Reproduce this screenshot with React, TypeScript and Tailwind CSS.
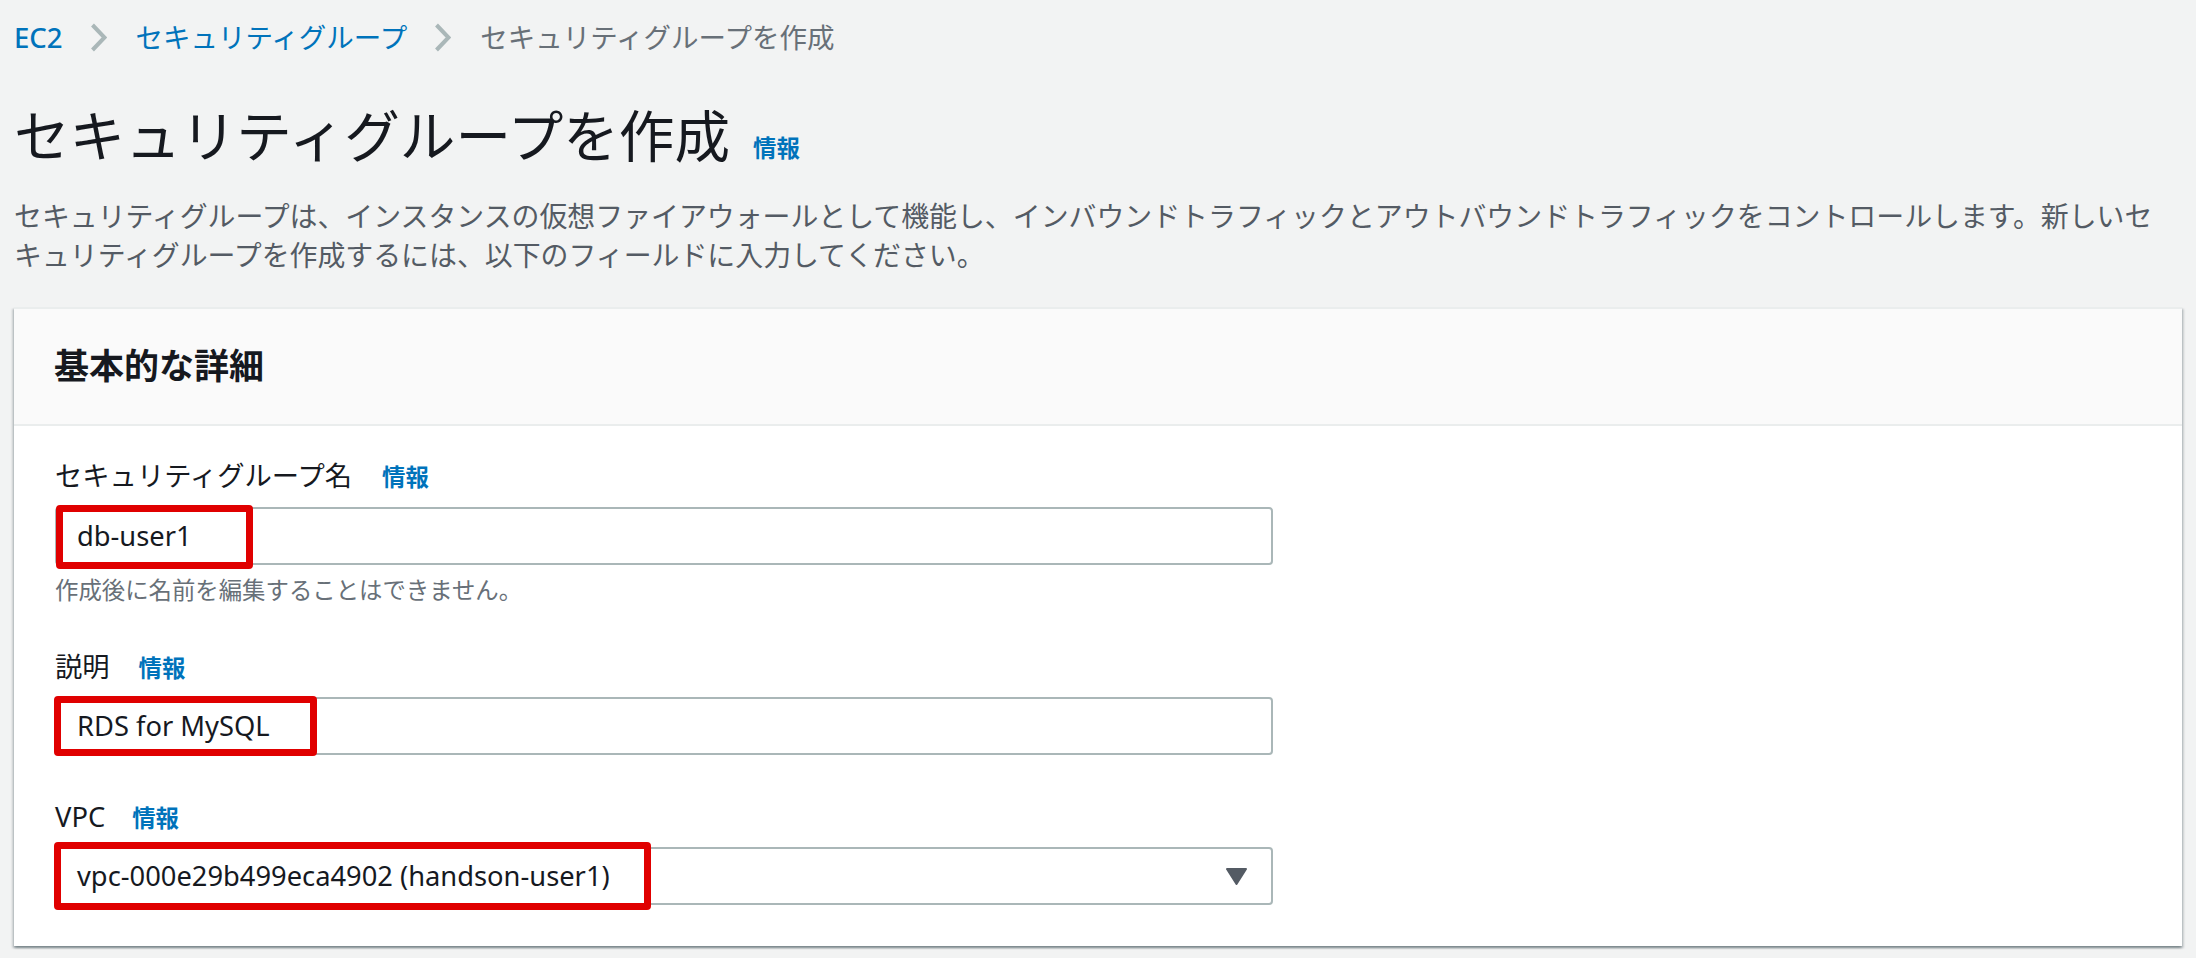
import React from "react";

function Chevron() {
  return (
    <svg width="17" height="29" viewBox="0 0 17 29" className="ml-[27px] mr-[29px] shrink-0">
      <polyline points="2.5,2 14.5,14.5 2.5,27" fill="none" stroke="#aab7b8" strokeWidth="4" strokeLinejoin="miter" />
    </svg>
  );
}

function Info({ className = "" }: { className?: string }) {
  return <span className={"text-[23.4px] font-bold text-[#0073bb] " + className}>情報</span>;
}

function Label({ text, gap }: { text: string; gap: string }) {
  return (
    <div className="flex items-baseline h-[39px] leading-[39px]">
      <span className="text-[27.3px] text-[#16191f]">{text}</span>
      <Info className={gap} />
    </div>
  );
}

export default function App() {
  return (
    <div className="min-h-screen bg-[#f2f3f3] font-['Noto_Sans','Noto_Sans_CJK_JP',sans-serif] px-[14px] pt-[18px] pb-[12px]">
      <nav className="flex items-center h-[39px] text-[27.5px] leading-[39px]">
        <span className="text-[#0073bb] font-medium">EC2</span>
        <Chevron />
        <span className="text-[#0073bb]">セキュリティグループ</span>
        <Chevron />
        <span className="text-[#687078]">セキュリティグループを作成</span>
      </nav>

      <div className="mt-[44px] flex items-baseline h-[70px]">
        <h1 className="text-[55.6px] leading-[70px] font-normal text-[#16191f]">セキュリティグループを作成</h1>
        <Info className="ml-[23px]" />
      </div>

      <p className="mt-[26px] text-[27.9px] leading-[38.5px] text-[#545b64] whitespace-nowrap">
        セキュリティグループは、インスタンスの仮想ファイアウォールとして機能し、インバウンドトラフィックとアウトバウンドトラフィックをコントロールします。新しいセ
        <br />
        キュリティグループを作成するには、以下のフィールドに入力してください。
      </p>

      <section className="mt-[33px] w-[2168px] bg-white border-t-2 border-[#eaeded] shadow-[0_2px_2px_0_rgba(0,28,36,0.3),2px_2px_2px_0_rgba(0,28,36,0.15),-2px_2px_2px_0_rgba(0,28,36,0.15)]">
        <div className="h-[117px] bg-[#fafafa] border-b-2 border-[#eaeded] flex items-center pl-[40px]">
          <h2 className="text-[35px] font-bold text-[#16191f]">基本的な詳細</h2>
        </div>

        <div className="pl-[41px] pt-[30px] pb-[41px]">
          <Label text="セキュリティグループ名" gap="ml-[30px]" />
          <div className="relative mt-[12px] w-[1218px] h-[58px] border-2 border-[#aab7b8] rounded-[4px] bg-white flex items-center pl-[20px]">
            <span className="text-[27.3px] text-[#16191f]">db-user1</span>
            <div className="absolute left-[-1px] top-[-4px] w-[197px] h-[64px] border-[7px] border-[#e00000] rounded-[4px]" />
          </div>
          <div className="mt-[10px] h-[31px] leading-[31px] text-[23.4px] text-[#687078]">
            作成後に名前を編集することはできません。
          </div>

          <div className="mt-[41px]">
            <Label text="説明" gap="ml-[29px]" />
          </div>
          <div className="relative mt-[11px] w-[1218px] h-[58px] border-2 border-[#aab7b8] rounded-[4px] bg-white flex items-center pl-[20px]">
            <span className="text-[27.3px] text-[#16191f]">RDS for MySQL</span>
            <div className="absolute left-[-3px] top-[-3px] w-[263px] h-[60px] border-[7px] border-[#e00000] rounded-[4px]" />
          </div>

          <div className="mt-[42px]">
            <Label text="VPC" gap="ml-[27px]" />
          </div>
          <div className="relative mt-[11px] w-[1218px] h-[58px] border-2 border-[#aab7b8] rounded-[4px] bg-white flex items-center justify-between pl-[20px] pr-[24px]">
            <span className="text-[27.3px] text-[#16191f]">vpc-000e29b499eca4902 (handson-user1)</span>
            <svg width="21" height="17" viewBox="0 0 21 17">
              <polygon points="1,1 20,1 10.5,16" fill="#545b64" stroke="#545b64" strokeWidth="2" strokeLinejoin="round" />
            </svg>
            <div className="absolute left-[-3px] top-[-7px] w-[597px] h-[68px] border-[7px] border-[#e00000] rounded-[4px]" />
          </div>
        </div>
      </section>
    </div>
  );
}
